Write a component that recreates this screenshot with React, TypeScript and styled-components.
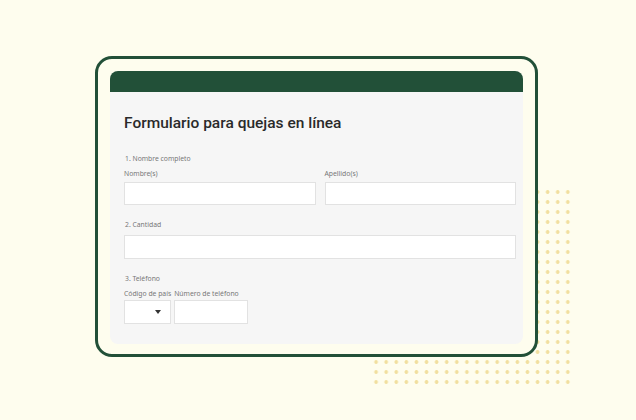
import React from 'react';
import styled, {createGlobalStyle} from 'styled-components';

const colors = {
  cream: '#fefdee',
  green: '#225038',
  card: '#f6f6f6',
  inputBorder: '#e2e2e2',
  label: '#767676',
  title: '#2a2a2a',
  dot: '#f1df9f',
};

const GlobalStyle = createGlobalStyle`
  html, body {
    margin: 0;
    padding: 0;
    background: ${colors.cream};
  }
  * {
    box-sizing: border-box;
  }
`;

const Page = styled.div`
  position: relative;
  width: 636px;
  height: 420px;
  overflow: hidden;
  padding: 56px 0 0 95px;
  background: ${colors.cream};
  font-family: "Noto Sans", "Open Sans", sans-serif;
`;

const Dots = styled.div`
  position: absolute;
  left: 371px;
  top: 187px;
  width: 202px;
  height: 200px;
  background-image: radial-gradient(circle, ${colors.dot} 1.6px, transparent 2.1px);
  background-size: 10.1px 10px;
`;

const Frame = styled.div`
  position: relative;
  width: 443px;
  height: 301px;
  padding: 12px 12px 10px 12px;
  border: 3px solid ${colors.green};
  border-radius: 17px;
  background: ${colors.cream};
`;

const Card = styled.div`
  height: 100%;
  border-radius: 8px;
  overflow: hidden;
  background: ${colors.card};
  display: flex;
  flex-direction: column;
`;

const Header = styled.div`
  height: 21px;
  background: ${colors.green};
`;

const Body = styled.div`
  padding: 21px 7px 0 14px;
  display: flex;
  flex-direction: column;
`;

const Title = styled.h1`
  margin: 0 0 21px;
  font-family: Roboto, "Noto Sans", sans-serif;
  font-size: 15.5px;
  font-weight: 500;
  color: ${colors.title};
  line-height: 20px;
`;

const Section = styled.div`
  display: flex;
  flex-direction: column;
  margin-bottom: 15px;
`;

const SectionLabel = styled.div`
  font-size: 6.8px;
  color: ${colors.label};
  line-height: 9px;
  margin: 0 0 6px 1px;
`;

const Row = styled.div<{$gap?: number}>`
  display: flex;
  gap: ${p => p.$gap ?? 9}px;
`;

const Field = styled.div<{$width?: number}>`
  display: flex;
  flex-direction: column;
  flex: ${p => (p.$width ? `0 0 ${p.$width}px` : '1 1 0')};
`;

const FieldLabel = styled.div<{$tight?: boolean}>`
  font-size: 6.8px;
  color: ${colors.label};
  line-height: 9px;
  margin-bottom: ${p => (p.$tight ? 2 : 4)}px;
  white-space: nowrap;
`;

const Input = styled.div<{$height?: number}>`
  position: relative;
  height: ${p => p.$height ?? 23}px;
  background: #fff;
  border: 1px solid ${colors.inputBorder};
`;

const Caret = styled.div`
  position: absolute;
  right: 9px;
  top: 50%;
  margin-top: -2px;
  width: 0;
  height: 0;
  border-left: 3.5px solid transparent;
  border-right: 3.5px solid transparent;
  border-top: 4px solid #333;
`;

export default function App() {
  return (
    <>
      <GlobalStyle/>
      <Page>
        <Dots/>
        <Frame>
          <Card>
            <Header/>
            <Body>
              <Title>Formulario para quejas en línea</Title>
              <Section>
                <SectionLabel>1. Nombre completo</SectionLabel>
                <Row>
                  <Field>
                    <FieldLabel>Nombre(s)</FieldLabel>
                    <Input/>
                  </Field>
                  <Field>
                    <FieldLabel>Apellido(s)</FieldLabel>
                    <Input/>
                  </Field>
                </Row>
              </Section>
              <Section>
                <SectionLabel>2. Cantidad</SectionLabel>
                <Input $height={24}/>
              </Section>
              <Section>
                <SectionLabel>3. Teléfono</SectionLabel>
                <Row $gap={3}>
                  <Field $width={46}>
                    <FieldLabel $tight>Código de país</FieldLabel>
                    <Input $height={24}>
                      <Caret/>
                    </Input>
                  </Field>
                  <Field $width={74}>
                    <FieldLabel $tight>Número de teléfono</FieldLabel>
                    <Input $height={24}/>
                  </Field>
                </Row>
              </Section>
            </Body>
          </Card>
        </Frame>
      </Page>
    </>
  );
}
